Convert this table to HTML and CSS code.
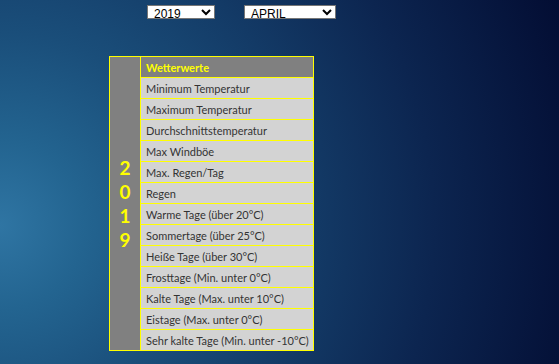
FILE: index.html
```html
<!DOCTYPE html>
<html lang="de">
<head>
<meta charset="utf-8">
<title>Wetterwerte</title>
<link rel="stylesheet" href="styles.css">
</head>
<body>
<div class="page">
  <div class="filters">
    <select class="sel sel-year"><option>2019</option></select>
    <select class="sel sel-month"><option>APRIL</option></select>
  </div>
  <table class="wtable">
    <tr>
      <td class="year" rowspan="14"><span class="digit">2</span><span class="digit">0</span><span class="digit">1</span><span class="digit">9</span></td>
      <th class="head">Wetterwerte</th>
    </tr>
    <tr><td class="cell">Minimum Temperatur</td></tr>
    <tr><td class="cell">Maximum Temperatur</td></tr>
    <tr><td class="cell">Durchschnittstemperatur</td></tr>
    <tr><td class="cell">Max Windböe</td></tr>
    <tr><td class="cell">Max. Regen/Tag</td></tr>
    <tr><td class="cell">Regen</td></tr>
    <tr><td class="cell">Warme Tage (über 20°C)</td></tr>
    <tr><td class="cell">Sommertage (über 25°C)</td></tr>
    <tr><td class="cell">Heiße Tage (über 30°C)</td></tr>
    <tr><td class="cell">Frosttage (Min. unter 0°C)</td></tr>
    <tr><td class="cell">Kalte Tage (Max. unter 10°C)</td></tr>
    <tr><td class="cell">Eistage (Max. unter 0°C)</td></tr>
    <tr><td class="cell">Sehr kalte Tage (Min. unter -10°C)</td></tr>
  </table>
</div>
</body>
</html>
```
FILE: styles.css
```css
html, body {
  margin: 0;
  padding: 0;
  height: 100%;
}
body {
  background: radial-gradient(circle at 0% 62%, #2f75a3 0%, #236490 14%, #1a4e7a 32%, #133a66 52%, #0c2550 72%, #030d33 100%);
  font-family: Lato, "Open Sans", sans-serif;
  overflow: hidden;
}
.page {
  padding-top: 5px;
}
.filters {
  display: flex;
  gap: 29px;
  padding-left: 147px;
  height: 14px;
}
.sel {
  height: 14px;
  padding: 0 0 0 2px;
  margin: 0;
  font-family: "Liberation Sans", Arial, sans-serif;
  font-size: 12px;
  line-height: 12px;
  background: #fff;
  color: #000;
  border: 1px solid #767676;
  border-radius: 0;
  box-sizing: border-box;
}
.sel-year { width: 68px; }
.sel-month { width: 92px; }
.wtable {
  margin: 37px 0 0 109px;
  border-collapse: collapse;
  border: 1px solid #ffff00;
  table-layout: fixed;
  width: 205px;
}
.wtable td, .wtable th {
  border: 1px solid #ffff00;
  padding: 0;
}
.year {
  width: 30px;
  background: #808080;
  color: #ffff00;
  font-weight: bold;
  font-size: 19px;
  text-align: center;
  vertical-align: middle;
  font-family: Lato, "Open Sans", sans-serif;
}
.digit {
  display: block;
  height: 24px;
  line-height: 24px;
}
.head {
  height: 20px;
  background: #808080;
  color: #ffff00;
  font-weight: bold;
  font-size: 11px;
  text-align: left;
  padding: 0 0 0 5px !important;
}
.cell {
  height: 20px;
  background: #d3d3d3;
  color: #333;
  font-size: 11px;
  padding: 0 0 0 5px !important;
  white-space: nowrap;
}
```
